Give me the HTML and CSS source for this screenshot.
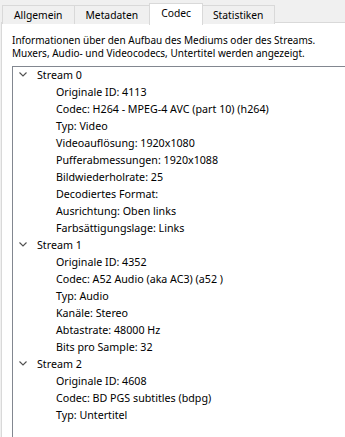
FILE: index.html
```html
<!DOCTYPE html>
<html lang="de">

<head>
    <meta charset="UTF-8">
    <meta name="viewport" content="width=device-width, initial-scale=1.0">
    <title>Medieninformationen</title>
    <link rel="stylesheet" href="styles.css">
</head>

<body>

    <div class="tabs">
        <div class="tab">Allgemein</div>
        <div class="tab">Metadaten</div>
        <div class="tab active">Codec</div>
        <div class="tab">Statistiken</div>
    </div>

    <div class="panel">
        <p class="info">Informationen über den Aufbau des Mediums oder des Streams.<br>Muxers, Audio- und Videocodecs, Untertitel werden angezeigt.</p>

        <div class="tree">
            <div class="node">
                <div class="row parent"><svg class="chevron" viewBox="0 0 8 5"><path d="M0.5 0.5 L4 4 L7.5 0.5" /></svg>Stream 0</div>
                <div class="row">Originale ID: 4113</div>
                <div class="row">Codec: H264 - MPEG-4 AVC (part 10) (h264)</div>
                <div class="row">Typ: Video</div>
                <div class="row">Videoauflösung: 1920x1080</div>
                <div class="row">Pufferabmessungen: 1920x1088</div>
                <div class="row">Bildwiederholrate: 25</div>
                <div class="row">Decodiertes Format:</div>
                <div class="row">Ausrichtung: Oben links</div>
                <div class="row">Farbsättigungslage: Links</div>
            </div>
            <div class="node">
                <div class="row parent"><svg class="chevron" viewBox="0 0 8 5"><path d="M0.5 0.5 L4 4 L7.5 0.5" /></svg>Stream 1</div>
                <div class="row">Originale ID: 4352</div>
                <div class="row">Codec: A52 Audio (aka AC3) (a52 )</div>
                <div class="row">Typ: Audio</div>
                <div class="row">Kanäle: Stereo</div>
                <div class="row">Abtastrate: 48000 Hz</div>
                <div class="row">Bits pro Sample: 32</div>
            </div>
            <div class="node">
                <div class="row parent"><svg class="chevron" viewBox="0 0 8 5"><path d="M0.5 0.5 L4 4 L7.5 0.5" /></svg>Stream 2</div>
                <div class="row">Originale ID: 4608</div>
                <div class="row">Codec: BD PGS subtitles (bdpg)</div>
                <div class="row">Typ: Untertitel</div>
            </div>
        </div>
    </div>

</body>

</html>
```

FILE: styles.css
```css
html, body {
    height: 100%;
}

body {
    font-family: "Noto Sans", "Open Sans", sans-serif;
    font-size: 10.7px;
    margin: 0;
    padding: 0;
    background-color: #f0f0f0;
    color: #000;
    overflow: hidden;
    display: flex;
    flex-direction: column;
}

.tabs {
    display: flex;
    padding: 5px 0 0 2px;
    height: 18px;
    position: relative;
    z-index: 1;
    font-size: 10.3px;
}

.tab {
    border: 1px solid #d9d9d9;
    border-bottom: none;
    background-color: #f0f0f0;
    height: 18px;
    line-height: 19px;
    padding: 0 11px;
    margin-left: -1px;
}

.tab:first-child {
    margin-left: 0;
}

.tab.active {
    background-color: #fff;
    margin-top: -2px;
    height: 21px;
    line-height: 19px;
    padding: 0 11px;
    margin-right: -1px;
    z-index: 2;
}

.panel {
    flex: 1;
    background-color: #fff;
    border-top: 1px solid #d9d9d9;
    border-left: 1px solid #d9d9d9;
    margin-left: 1px;
    margin-top: -1px;
    padding: 11px 0 0 10px;
    display: flex;
    flex-direction: column;
}

.info {
    margin: 0;
    font-size: 10px;
    line-height: 13px;
    white-space: nowrap;
}

.tree {
    flex: 1;
    margin-top: 6px;
    border-top: 1px solid #828790;
    border-left: 1px solid #828790;
}

.row {
    height: 17px;
    line-height: 17px;
    padding-left: 43px;
    white-space: nowrap;
}

.row.parent {
    padding-left: 6px;
    display: flex;
    align-items: center;
}

.chevron {
    width: 8px;
    height: 5px;
    margin-right: 10px;
    margin-top: -2px;
}

.chevron path {
    fill: none;
    stroke: #505050;
    stroke-width: 1.1;
}
```
